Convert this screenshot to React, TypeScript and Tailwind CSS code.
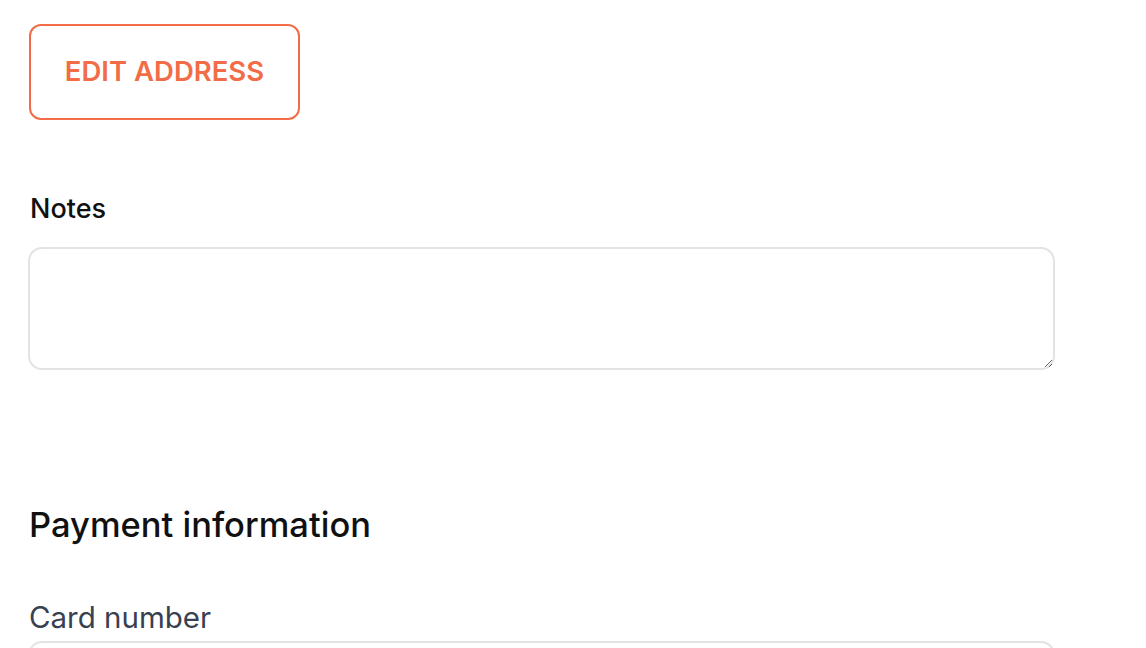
export default function App() {
  return (
    <div className="min-h-screen bg-white font-['Inter','Noto_Sans',sans-serif] text-[#111111]">
      <div className="w-[1027px] pl-[28px] pt-[24px]">
        {/* Address action */}
        <button className="ml-[1px] flex h-[96px] w-[271px] items-center justify-center rounded-[12px] border-2 border-[#f26d47] text-[27.5px] font-semibold leading-none text-[#f26d47]">
          EDIT ADDRESS
        </button>

        {/* Notes */}
        <label className="mt-[73px] block pl-[2px] text-[27px] font-medium leading-[32px]">Notes</label>
        <textarea className="mt-[22px] block h-[123px] w-[1027px] resize-y rounded-[14px] border-2 border-[#e3e3e3] px-4 py-3 text-[20px] outline-none" />

        {/* Payment */}
        <h2 className="mt-[133px] pl-[1px] text-[34.5px] font-medium leading-[44px]">Payment information</h2>
        <label className="mt-[52px] block pl-[1px] text-[29.5px] leading-[36px] text-[#374151]">Card number</label>
        <input className="mt-[6px] block h-[60px] w-[1027px] rounded-[14px] border-2 border-[#e3e3e3] px-4 text-[20px] outline-none" />
      </div>
    </div>
  );
}
